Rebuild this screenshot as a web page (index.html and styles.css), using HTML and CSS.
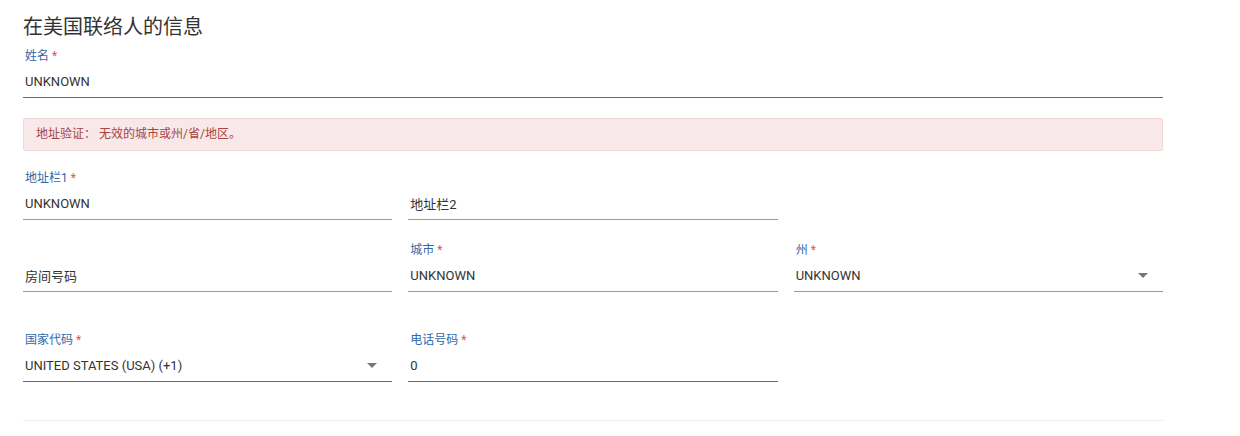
FILE: index.html
```html
<!doctype html>
<html lang="zh-CN">
<head>
    <meta charset="UTF-8">
    <meta name="viewport" content="width=device-width, initial-scale=1">
    <title>在美国联络人的信息</title>
    <link rel="stylesheet" href="styles.css">
</head>
<body>
<div class="wrap">
    <h2 class="section-title">在美国联络人的信息</h2>

    <div class="field field-dark">
        <div class="field-label">姓名 <span class="req">*</span></div>
        <div class="field-input">UNKNOWN</div>
    </div>

    <div class="alert">地址验证： 无效的城市或州/省/地区。</div>

    <div class="row row-addr">
        <div class="field">
            <div class="field-label">地址栏1 <span class="req">*</span></div>
            <div class="field-input">UNKNOWN</div>
        </div>
        <div class="field">
            <div class="field-label"></div>
            <div class="field-input">地址栏2</div>
        </div>
    </div>

    <div class="row row-city">
        <div class="field">
            <div class="field-label"></div>
            <div class="field-input">房间号码</div>
        </div>
        <div class="field">
            <div class="field-label">城市 <span class="req">*</span></div>
            <div class="field-input">UNKNOWN</div>
        </div>
        <div class="field">
            <div class="field-label">州 <span class="req">*</span></div>
            <div class="field-input">UNKNOWN<span class="caret"></span></div>
        </div>
    </div>

    <div class="row row-phone">
        <div class="field field-dark">
            <div class="field-label">国家代码 <span class="req">*</span></div>
            <div class="field-input">UNITED STATES (USA) (+1)<span class="caret"></span></div>
        </div>
        <div class="field field-dark">
            <div class="field-label">电话号码 <span class="req">*</span></div>
            <div class="field-input">0</div>
        </div>
    </div>

    <div class="divider"></div>
</div>
</body>
</html>
```

FILE: styles.css
```css
body {
    margin: 0;
    padding: 0;
    background: #ffffff;
    font-family: Roboto, "Noto Sans CJK SC", sans-serif;
    color: #333333;
}
.wrap {
    width: 1140px;
    padding: 15px 0 0 23px;
}
.section-title {
    margin: 0 0 9px 0;
    font-size: 20px;
    line-height: 24px;
    font-weight: normal;
    color: #333333;
}
.field {
    display: flex;
    flex-direction: column;
    border-bottom: 1px solid #9a9a9a;
}
.field-dark {
    border-bottom-color: #6c6c6c;
}
.field-label {
    height: 17px;
    line-height: 17px;
    padding-left: 2px;
    font-size: 12px;
    color: #2f67a8;
}
.req {
    color: #e0524d;
}
.field-input {
    display: flex;
    align-items: center;
    justify-content: space-between;
    height: 32px;
    padding: 0 15px 0 2px;
    font-size: 13px;
    color: #333333;
}
.caret {
    width: 0;
    height: 0;
    border-left: 5px solid transparent;
    border-right: 5px solid transparent;
    border-top: 5px solid #777777;
}
.alert {
    margin-top: 20px;
    height: 31px;
    line-height: 31px;
    padding-left: 12px;
    font-size: 12px;
    color: #a94442;
    background: #f8e8e9;
    border: 1px solid #efd6d8;
    border-radius: 2px;
}
.row {
    display: grid;
    grid-template-columns: repeat(3, 1fr);
    column-gap: 16px;
}
.row-addr {
    margin-top: 19px;
}
.row-city {
    margin-top: 22px;
}
.row-phone {
    margin-top: 40px;
}
.divider {
    margin-top: 38px;
    height: 1px;
    background: #ececec;
}
```
